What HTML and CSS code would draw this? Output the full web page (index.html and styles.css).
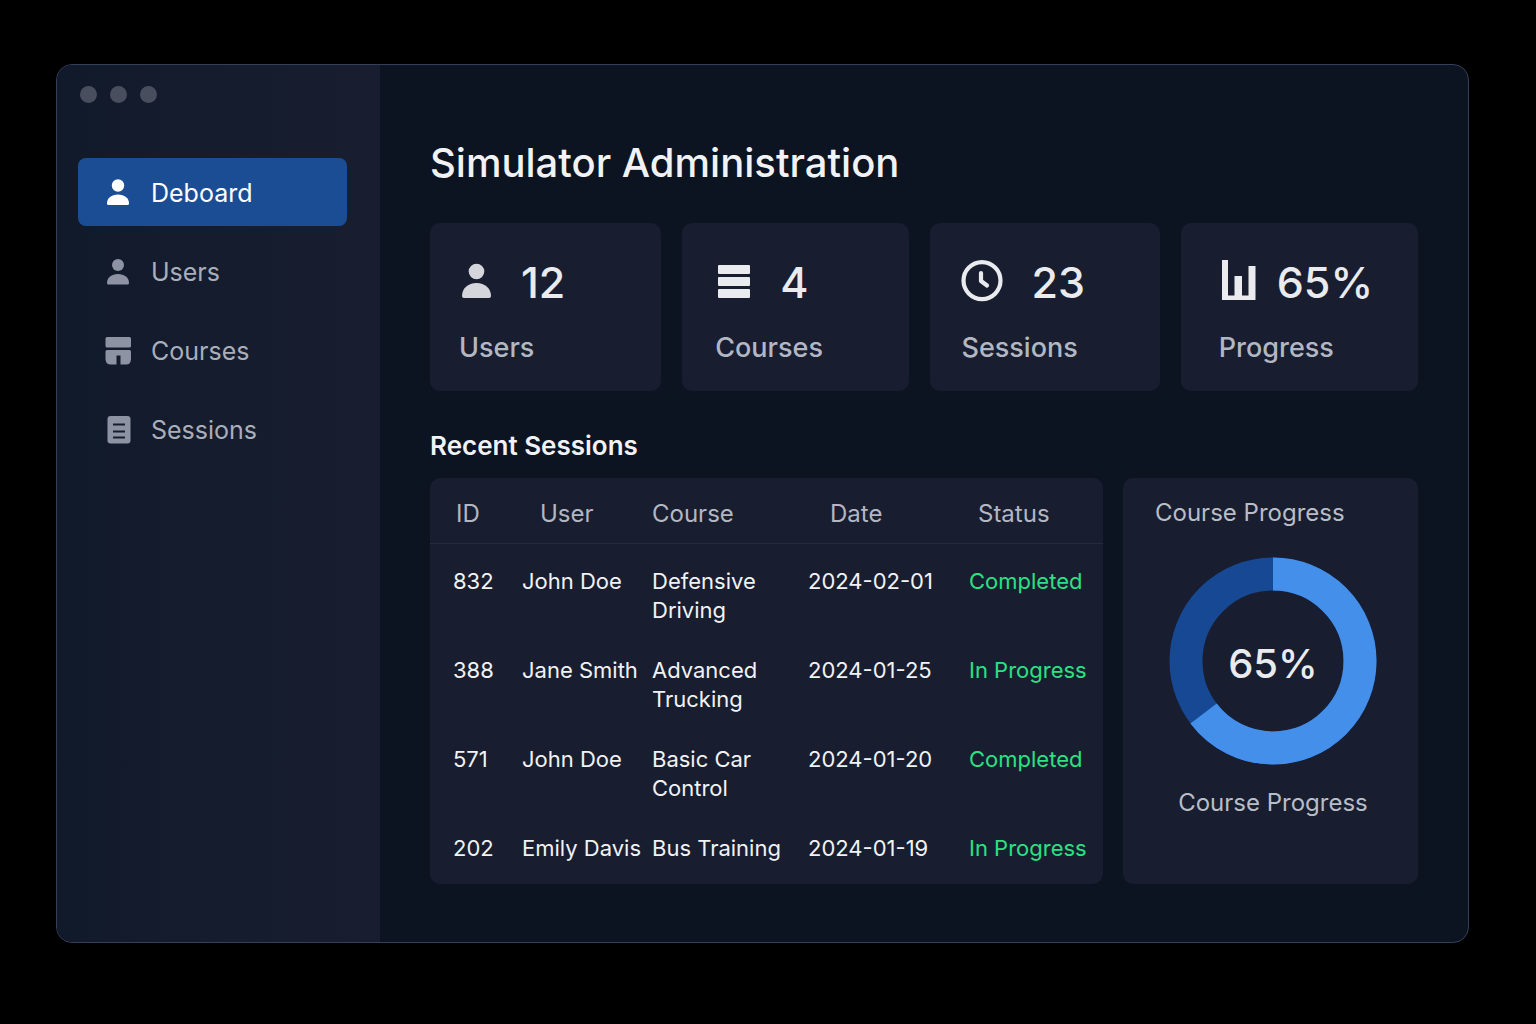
FILE: index.html
```html
<!DOCTYPE html>
<html lang="en">
<head>
<meta charset="utf-8">
<meta name="viewport" content="width=device-width, initial-scale=1">
<title>Simulator Administration</title>
<link rel="stylesheet" href="styles.css">
</head>

<body>
<div class="window">
	<aside class="sidebar">
		<div class="dots"><span></span><span></span><span></span></div>
		<nav class="menu">
			<a href="#" class="ac">
				<svg viewBox="0 0 28 28"><circle cx="14" cy="6.500" r="6.2"/><path d="M3 24.500c0-5.500 4.500-9 11-9s11 3.500 11 9q0 1.500-1.500 1.500h-19Q3 26 3 24.500z"/></svg>
				Deboard
			</a>
			<a href="#">
				<svg viewBox="0 0 28 28"><circle cx="14" cy="7" r="6"/><path d="M3 25c0-5.500 4.500-9 11-9s11 3.500 11 9q0 1.500-1.500 1.500h-19Q3 26.500 3 25z"/></svg>
				Users
			</a>
			<a href="#">
				<svg viewBox="0 0 28 28"><rect x="1.500" y="0" width="25.500" height="10.500" rx="1.500"/><path d="M3 13h22.500q1.500 0 1.500 1.500V22q0 5.500-5 5.500h-5.500v-9h-4v9H7q-5.500 0-5.500-5.500v-7.500Q1.500 13 3 13z"/></svg>
				Courses
			</a>
			<a href="#">
				<svg viewBox="0 0 28 28"><rect x="3.500" y="0" width="23" height="27.500" rx="3"/><path class="lines" d="M9 8.500h12M9 15.500h12M9 21.500h12"/></svg>
				Sessions
			</a>
		</nav>
	</aside>

	<main class="main">
		<h1>Simulator Administration</h1>

		<section class="stats">
			<div class="card stat">
				<div class="num">
					<svg viewBox="0 0 44 44"><g opacity=".9"><circle cx="17.500" cy="11.500" r="7.800"/><path d="M3 36c0-7.500 6-13 14.500-13S32 28.500 32 36q0 2-2 2H5q-2 0-2-2z"/></g></svg>
					12
				</div>
				<p>Users</p>
			</div>
			<div class="card stat courses">
				<div class="num">
					<svg viewBox="0 0 44 44"><rect x="3" y="5" width="32" height="9" rx="1"/><rect x="3" y="17" width="32" height="9" rx="1"/><rect x="3" y="29" width="32" height="9" rx="1"/></svg>
					4
				</div>
				<p>Courses</p>
			</div>
			<div class="card stat sessions">
				<div class="num">
					<svg viewBox="0 0 44 44"><g fill="none" stroke="#e9ebef" stroke-width="4.200" stroke-linecap="round" stroke-linejoin="round"><circle cx="21" cy="20.600" r="18.500"/><path d="M20 13v8l6 4.500"/></g></svg>
					23
				</div>
				<p>Sessions</p>
			</div>
			<div class="card stat progress">
				<div class="num">
					<svg viewBox="0 0 44 44"><path d="M3 0h6v35.500h6.500V16H23v19.500h6.500V6h7v34H3z"/></svg>
					65%
				</div>
				<p>Progress</p>
			</div>
		</section>

		<h2>Recent Sessions</h2>

		<section class="panels">
			<div class="card">
				<table>
					<colgroup><col class="c-id"><col class="c-user"><col class="c-course"><col class="c-date"><col class="c-status"></colgroup>
					<thead>
						<tr><th class="id">ID</th><th class="user">User</th><th>Course</th><th class="date">Date</th><th class="status">Status</th></tr>
					</thead>
					<tbody>
						<tr><td class="id">832</td><td>John Doe</td><td class="wrap">Defensive Driving</td><td>2024-02-01</td><td class="ok">Completed</td></tr>
						<tr><td class="id">388</td><td>Jane Smith</td><td class="wrap">Advanced Trucking</td><td>2024-01-25</td><td class="ok">In Progress</td></tr>
						<tr><td class="id">571</td><td>John Doe</td><td class="wrap">Basic Car Control</td><td>2024-01-20</td><td class="ok">Completed</td></tr>
						<tr><td class="id">202</td><td>Emily Davis</td><td class="wrap">Bus Training</td><td>2024-01-19</td><td class="ok">In Progress</td></tr>
					</tbody>
				</table>
			</div>

			<div class="card chart">
				<h3>Course Progress</h3>
				<div class="donut">
					<svg viewBox="0 0 208 208">
						<circle class="track" cx="104" cy="104" r="87"/>
						<circle class="value" cx="104" cy="104" r="87" pathLength="100" stroke-dasharray="64.700 100" transform="rotate(-90 104 104)"/>
					</svg>
					<strong>65%</strong>
				</div>
				<p>Course Progress</p>
			</div>
		</section>
	</main>
</div>
</body>
</html>
```
FILE: styles.css
```css
* {margin:0; padding:0; box-sizing:border-box;}
body {background:#000; padding:64px 67px 64px 56px; font-family:Inter, "Liberation Sans", sans-serif; color:#f1f2f5;}
a {text-decoration:none;}
svg {display:block; flex:none; fill:currentColor;}

.window {display:flex; border:1px solid #34405a; border-radius:16px; overflow:hidden; background:#0c1321;}

/* sidebar */
.sidebar {flex:0 0 323px; padding:21px 33px 0 21px; background:linear-gradient(90deg, #111a2b, #181e2f);}
.dots {display:flex; gap:13px; padding-left:2px;}
.dots span {width:17px; height:17px; border-radius:50%; background:#494e5e;}
.menu {display:flex; flex-direction:column; gap:11px; margin-top:55px;}
.menu a {display:flex; align-items:center; gap:19px; height:68px; padding:2px 26px 0; border-radius:8px; font-size:25px; color:#a9aeba;}
.menu svg {width:28px; height:28px; color:#8d93a2;}
.menu .lines {fill:none; stroke:#161d2c; stroke-width:2;}
.menu a.ac {background:#1b4d94; color:#fff;}
.menu .ac svg {color:#fff;}

/* content */
.main {flex:1; min-width:0; padding:74px 50px 58px;}
h1 {font-size:40px; line-height:48px; font-weight:500;}
h2 {margin:39px 0 16px; font-size:26px; line-height:32px; font-weight:600;}
.card {background:#181e2f; border-radius:10px;}

.stats {display:grid; grid-template-columns:231fr 227fr 229fr 237fr; gap:21px; margin-top:36px;}
.stat {height:168px; padding:33px 0 0 29px;}
.num {display:flex; align-items:center; gap:18px; height:52px; font-size:43px; font-weight:500; color:#e9ebef;}
.num svg {width:44px; height:44px;}
.stat p {margin-top:24px; font-size:27px; line-height:32px; font-weight:500; color:#b3b7c2;}
.stat.courses {padding-left:33px;}
.courses .num {gap:21px;}
.stat.sessions {padding-left:31px;}
.sessions .num {gap:26px;}
.stat.progress {padding-left:38px;}
.progress .num {gap:14px;}

.panels {display:grid; grid-template-columns:673fr 295fr; gap:20px;}

/* sessions table */
table {width:100%; table-layout:fixed; border-collapse:separate; border-spacing:0; line-height:29px; text-align:left;}
.c-id {width:92px;}
.c-user {width:130px;}
.c-course {width:156px;}
.c-date {width:161px;}
.c-status {width:134px;}
th {height:66px; padding-top:5px; border-bottom:1px solid #252b3b; font-size:24px; font-weight:400; color:#b3b7c2;}
td {padding:23px 0 8px; font-size:22px; vertical-align:top; white-space:nowrap;}
td.wrap {white-space:normal; padding-right:20px;}
td.id {padding-left:23px;}
th.id {padding-left:26px;}
th.user {padding-left:18px;}
th.date {padding-left:22px;}
th.status {padding-left:9px;}
tr:last-child td {padding-bottom:21px;}
.ok {color:#2be183;}

/* progress chart */
.chart {padding:19px 27px 0 32px; font-size:24px; line-height:32px; color:#b9bdc7;}
.chart h3 {font-size:24px; font-weight:400;}
.donut {display:grid; place-items:center; margin-top:28px;}
.donut svg, .donut strong {grid-area:1 / 1;}
.donut svg {width:208px; height:208px;}
.donut circle {fill:none; stroke-width:33;}
.track {stroke:#174894;}
.value {stroke:#438fea;}
.donut strong {padding-top:6px; font-size:40px; font-weight:500; color:#e9ebef;}
.chart p {margin-top:22px; text-align:center;}
```
